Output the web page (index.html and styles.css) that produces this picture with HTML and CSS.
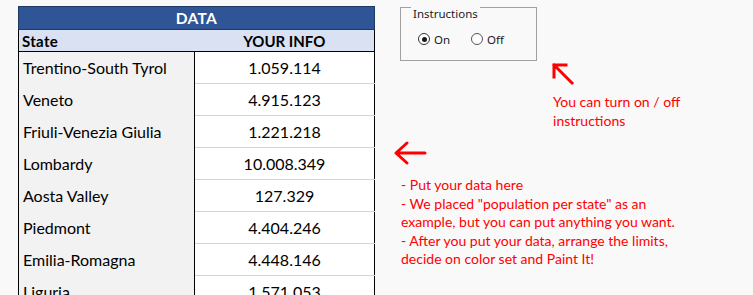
FILE: index.html
```html
<!DOCTYPE html>
<html lang="en">
<head>
<meta charset="utf-8"/>
<meta content="width=device-width, initial-scale=1.0" name="viewport"/>
<title>Data input</title>
<link rel="stylesheet" href="styles.css">
</head>
<body>
<div class="sheet">
  <table class="data">
    <colgroup>
      <col class="col-state"/>
      <col class="col-info"/>
    </colgroup>
    <thead>
      <tr class="title-row"><th colspan="2">DATA</th></tr>
      <tr class="head-row"><th class="state-h">State</th><th class="info-h">YOUR INFO</th></tr>
    </thead>
    <tbody>
      <tr><td>Trentino-South Tyrol</td><td>1.059.114</td></tr>
      <tr><td>Veneto</td><td>4.915.123</td></tr>
      <tr><td>Friuli-Venezia Giulia</td><td>1.221.218</td></tr>
      <tr><td>Lombardy</td><td>10.008.349</td></tr>
      <tr><td>Aosta Valley</td><td>127.329</td></tr>
      <tr><td>Piedmont</td><td>4.404.246</td></tr>
      <tr><td>Emilia-Romagna</td><td>4.448.146</td></tr>
      <tr><td>Liguria</td><td>1.571.053</td></tr>
    </tbody>
  </table>

  <div class="notes">
    <div class="group">
      <span class="group-title">Instructions</span>
      <label class="radio"><span class="dot on"></span>On</label>
      <label class="radio"><span class="dot"></span>Off</label>
    </div>

    <div class="hint hint-toggle">
      <svg class="arrow arrow-up" width="24" height="24" viewBox="0 0 24 24">
        <path d="M2 2 L20 20 M2 2 L14 2 M2 2 L2 14" fill="none" stroke="#ff0000" stroke-width="3" stroke-linecap="square"/>
      </svg>
      <p>You can turn on / off<br/>instructions</p>
    </div>

    <div class="hint hint-data">
      <svg class="arrow arrow-left" width="34" height="28" viewBox="0 0 34 28">
        <path d="M3 14 L32 14 M3 14 L14 4 M3 14 L14 24" fill="none" stroke="#ff0000" stroke-width="3" stroke-linecap="round"/>
      </svg>
      <p>- Put your data here<br/>
      - We placed "population per state" as an<br/>
      example, but you can put anything you want.<br/>
      - After you put your data, arrange the limits,<br/>
      decide on color set and Paint It!</p>
    </div>
  </div>
</div>
</body>
</html>
```

FILE: styles.css
```css
html, body {
  margin: 0;
  height: 295px;
  overflow: hidden;
}
body {
  background: #f9f9f9;
  font-family: Lato, 'Liberation Sans', sans-serif;
  color: #000;
}
.sheet {
  display: flex;
  align-items: flex-start;
  padding: 6px 0 0 18px;
}

/* table */
.data {
  border-collapse: collapse;
  width: 356px;
  table-layout: fixed;
  border: 1px solid #000;
}
.col-state { width: 176px; }
.col-info { width: 180px; }
.title-row th {
  height: 22px;
  padding: 0;
  background: #2f5597;
  color: #fff;
  font-size: 15.5px;
  font-weight: bold;
  border: 1px solid #203864;
  letter-spacing: 0.3px;
}
.head-row th {
  height: 21px;
  padding: 0;
  background: #d9e1f2;
  font-size: 15px;
  font-weight: bold;
  border-bottom: 1px solid #000;
}
.state-h {
  text-align: left;
  padding-left: 3px !important;
  letter-spacing: 0.3px;
}
.info-h { text-align: center; }
.data td {
  height: 31px;
  padding: 0;
  font-size: 16px;
}
.data td:first-child {
  background: #f2f2f2;
  padding-left: 4px;
  border-right: 1px solid #000;
}
.data td:last-child {
  background: #fff;
  text-align: center;
  border-bottom: 1px solid #d4d4d4;
}

/* right side */
.notes {
  margin-left: 25px;
  margin-top: 1px;
  width: 355px;
}
.group {
  position: relative;
  box-sizing: border-box;
  width: 137px;
  height: 54px;
  padding: 10px 0 0 17px;
  border: 1px solid #a0a0a0;
  font-family: 'Noto Sans', 'Open Sans', sans-serif;
  font-size: 11.5px;
  color: #1a1a1a;
  display: flex;
  align-items: center;
  gap: 21px;
}
.group-title {
  position: absolute;
  top: -1px;
  left: 10px;
  padding: 0 2px;
  background: #f9f9f9;
  line-height: 14px;
}
.radio {
  display: flex;
  align-items: center;
  gap: 4px;
}
.dot {
  width: 12px;
  height: 12px;
  border: 1px solid #333;
  border-radius: 50%;
  background: #fff;
  box-sizing: border-box;
  position: relative;
}
.dot.on::after {
  content: "";
  position: absolute;
  left: 2.5px;
  top: 2.5px;
  width: 5px;
  height: 5px;
  border-radius: 50%;
  background: #1a1a1a;
}
.dot:not(.on) { border-color: #555; }

.hint p {
  margin: 0;
  color: #ff0000;
  font-size: 14px;
  line-height: 18.5px;
}
.hint-toggle {
  margin-left: 153px;
  margin-top: 2px;
}
.arrow { display: block; }
.arrow-up { margin-left: -1px; }
.hint-toggle p { margin-top: 6px; }
.hint-data {
  margin-top: 9px;
}
.arrow-left { margin-left: -7px; }
.hint-data p {
  margin-top: 9px;
  margin-left: 1px;
}
```
